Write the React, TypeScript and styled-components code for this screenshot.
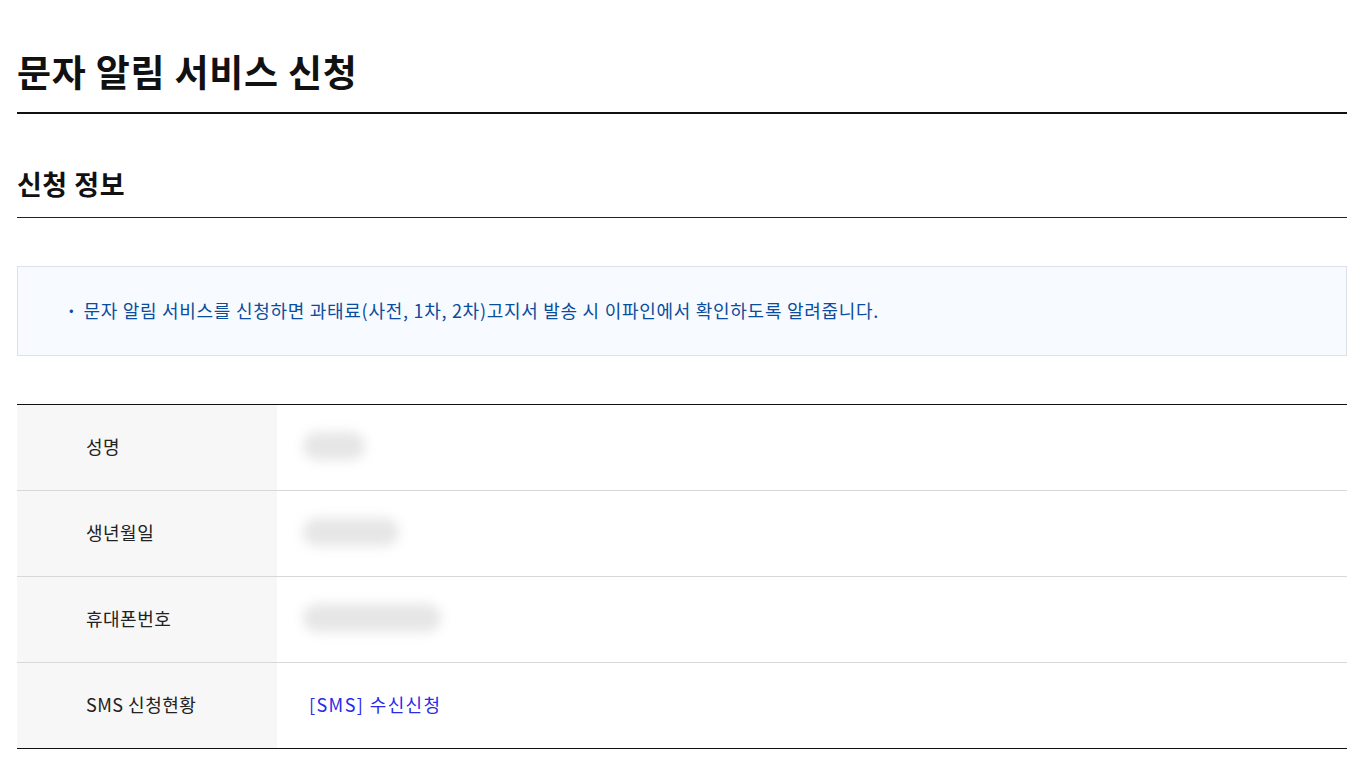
import React from 'react';
import styled, { createGlobalStyle } from 'styled-components';

const GlobalStyle = createGlobalStyle`
  html, body {
    margin: 0;
    padding: 0;
    background: #fff;
    font-family: "Noto Sans CJK KR", "Noto Sans", sans-serif;
    color: #111;
  }
`;

const Page = styled.div`
  padding: 44px 19px 16px 17px;
`;

const Title = styled.h1`
  margin: 0;
  padding-bottom: 14px;
  font-size: 37px;
  line-height: 54px;
  font-weight: 600;
  letter-spacing: 0.75px;
  border-bottom: 2px solid #111;
`;

const SectionTitle = styled.h2`
  margin: 50px 0 0;
  padding-bottom: 13px;
  font-size: 27px;
  line-height: 40px;
  font-weight: 600;
  letter-spacing: 0.5px;
  border-bottom: 1px solid #222;
`;

const Notice = styled.div`
  margin-top: 48px;
  height: 86px;
  display: flex;
  align-items: center;
  padding: 0 48px 2px;
  background: #f7faff;
  border: 1px solid #dde2ea;
`;

const NoticeItem = styled.p`
  margin: 0;
  font-size: 18px;
  color: #0a4d9c;
  letter-spacing: 0.72px;
  &::before {
    content: '·';
    font-weight: 700;
    margin-right: 6px;
  }
`;

const Table = styled.div`
  margin-top: 48px;
  border-top: 1px solid #111;
  border-bottom: 1px solid #111;
`;

const Row = styled.div`
  display: grid;
  grid-template-columns: 260px 1fr;
  height: 85px;
  & + & {
    border-top: 1px solid #d8d8d8;
  }
`;

const Label = styled.div`
  display: flex;
  align-items: center;
  padding: 0 0 3px 69px;
  background: #f7f7f7;
  font-size: 18px;
  letter-spacing: 0.5px;
  color: #222;
`;

const Value = styled.div`
  display: flex;
  align-items: center;
  padding: 0 0 3px 26px;
`;

const Blur = styled.div<{ $w: number }>`
  width: ${p => p.$w}px;
  height: 28px;
  border-radius: 14px;
  background: #e6e6e6;
  filter: blur(6px);
`;

const SmsLink = styled.a`
  margin-left: 6px;
  font-size: 18px;
  color: #2a2ae8;
  text-decoration: none;
  letter-spacing: 1.4px;
`;

const rows = [
  { label: '성명', blur: 62 },
  { label: '생년월일', blur: 96 },
  { label: '휴대폰번호', blur: 138 },
];

export default function App() {
  return (
    <>
      <GlobalStyle />
      <Page>
        <Title>문자 알림 서비스 신청</Title>
        <SectionTitle>신청 정보</SectionTitle>
        <Notice>
          <NoticeItem>문자 알림 서비스를 신청하면 과태료(사전, 1차, 2차)고지서 발송 시 이파인에서 확인하도록 알려줍니다.</NoticeItem>
        </Notice>
        <Table>
          {rows.map(r => (
            <Row key={r.label}>
              <Label>{r.label}</Label>
              <Value>
                <Blur $w={r.blur} />
              </Value>
            </Row>
          ))}
          <Row>
            <Label>SMS 신청현황</Label>
            <Value>
              <SmsLink href="#">[SMS] 수신신청</SmsLink>
            </Value>
          </Row>
        </Table>
      </Page>
    </>
  );
}
